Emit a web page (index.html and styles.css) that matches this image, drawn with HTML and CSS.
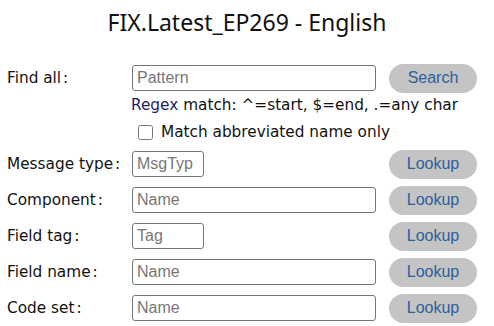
FILE: index.html
```html
<!DOCTYPE html>
<html lang="en">
<head>
    <meta charset="UTF-8">
    <title>FIX.Latest_EP269 - English</title>
    <link rel="stylesheet" href="styles.css">
</head>
<body>
    <h1 class="title">FIX.Latest_EP269 - English</h1>
    <form class="search">
        <div class="row">
            <label class="label">Find all<span class="colon">:</span></label>
            <input class="field wide" type="text" placeholder="Pattern">
            <button class="btn" type="button">Search</button>
        </div>
        <div class="hint">
            <p><span class="regex">Regex</span> match: ^=start, $=end, .=any char</p>
            <label class="check"><input type="checkbox"> Match abbreviated name only</label>
        </div>
        <div class="row">
            <label class="label">Message type<span class="colon">:</span></label>
            <input class="field short" type="text" placeholder="MsgTyp">
            <button class="btn" type="button">Lookup</button>
        </div>
        <div class="row">
            <label class="label">Component<span class="colon">:</span></label>
            <input class="field wide" type="text" placeholder="Name">
            <button class="btn" type="button">Lookup</button>
        </div>
        <div class="row">
            <label class="label">Field tag<span class="colon">:</span></label>
            <input class="field short" type="text" placeholder="Tag">
            <button class="btn" type="button">Lookup</button>
        </div>
        <div class="row">
            <label class="label">Field name<span class="colon">:</span></label>
            <input class="field wide" type="text" placeholder="Name">
            <button class="btn" type="button">Lookup</button>
        </div>
        <div class="row">
            <label class="label">Code set<span class="colon">:</span></label>
            <input class="field wide" type="text" placeholder="Name">
            <button class="btn" type="button">Lookup</button>
        </div>
    </form>
</body>
</html>
```

FILE: styles.css
```css
body {
    margin: 0;
    padding: 0 7px;
    font-family: "DejaVu Sans", sans-serif;
    color: #111;
}
.title {
    margin: 6px 0 22px 0;
    font-family: "Noto Sans", sans-serif;
    font-size: 23px;
    font-weight: normal;
    text-align: center;
}
.row {
    display: grid;
    grid-template-columns: 112px 244px 88px;
    column-gap: 13px;
    align-items: center;
    height: 36px;
}
.label {
    font-size: 15.3px;
    white-space: nowrap;
}
.colon {
    margin-left: 2px;
}
.field {
    box-sizing: border-box;
    height: 26px;
    padding: 0 4px;
    border: 1px solid #767676;
    border-radius: 3px;
    font-family: "Liberation Sans", sans-serif;
    font-size: 16px;
    color: #111;
}
.field::placeholder {
    color: #777;
}
.wide {
    width: 244px;
}
.short {
    width: 72px;
}
.btn {
    height: 29px;
    border: none;
    border-radius: 15px;
    background: #c4c4c4;
    color: #2b5f9e;
    font-family: "Liberation Sans", sans-serif;
    font-size: 16px;
    cursor: pointer;
}
.hint {
    margin-left: 124px;
    font-size: 15.3px;
}
.hint p {
    margin: 0;
    height: 18px;
    line-height: 18px;
}
.regex {
    color: #1f1f6e;
}
.check {
    display: flex;
    align-items: center;
    gap: 8px;
    height: 22px;
    margin: 7px 0 3px 0;
    padding-left: 7px;
}
.check input {
    margin: 0;
    width: 15px;
    height: 15px;
}
```
